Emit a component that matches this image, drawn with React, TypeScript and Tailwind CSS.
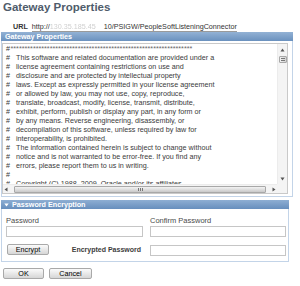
import React from "react";

const lines: string[] = [
  "This software and related documentation are provided under a",
  "license agreement containing restrictions on use and",
  "disclosure and are protected by intellectual property",
  "laws. Except as expressly permitted in your license agreement",
  "or allowed by law, you may not use, copy, reproduce,",
  "translate, broadcast, modify, license, transmit, distribute,",
  "exhibit, perform, publish or display any part, in any form or",
  "by any means. Reverse engineering, disassembly, or",
  "decompilation of this software, unless required by law for",
  "interoperability, is prohibited.",
  "The information contained herein is subject to change without",
  "notice and is not warranted to be error-free. If you find any",
  "errors, please report them to us in writing.",
  "",
  "Copyright (C) 1988, 2009, Oracle and/or its affiliates",
];

function Btn({ label, w }: { label: string; w: string }) {
  return (
    <div
      className={`${w} h-[11px] rounded-[2px] border border-[#a9a9a9] bg-linear-to-b from-[#fbfbfb] to-[#d6d6d6] text-[7.2px] leading-[9px] text-black flex items-center justify-center`}
    >
      {label}
    </div>
  );
}

export default function App() {
  return (
    <div className="w-[300px] h-[286px] bg-white overflow-hidden font-['Liberation_Sans',Arial,sans-serif] text-[#333]">
      {/* Title */}
      <div className="pl-[3px] h-[14px] text-[11.5px] leading-[14px] font-bold text-[#4f5c6b]">
        Gateway Properties
      </div>

      {/* URL row */}
      <div className="mt-[8px] h-[10px] flex items-start pl-[13px] text-[7.2px] leading-[9px]">
        <span className="font-bold text-[#333]">URL</span>
        <span className="ml-[4px] inline-flex h-[10px] border-b border-[#9a9a9a] text-[#333]">
          <span>http://</span>
          <span className="w-[54px] text-[#cfcfcf] blur-[0.6px] whitespace-nowrap">
            130.35.185.45
          </span>
          <span>10/PSIGW/PeopleSoftListeningConnector</span>
        </span>
      </div>

      {/* Gateway Properties panel */}
      <div className="ml-[1px] w-[292px]">
        <div className="h-[9px] bg-linear-to-b from-[#93b2d5] to-[#6a91be] text-white font-bold text-[7.2px] leading-[9px] pl-[4px]">
          Gateway Properties
        </div>
        <div className="border-x border-b border-[#c3d4e8] pt-[2px] pb-[2px]">
          <div className="w-[286px] h-[151px] border border-[#c9c9c9] bg-white flex flex-col">
            <div className="flex flex-1 min-h-0">
              <div className="flex-1 overflow-hidden pl-[3px] text-[7.2px] leading-[9px] text-[#3a3a3a] whitespace-nowrap">
                <div className="flex">
                  <span>#</span>
                  <span className="ml-[0.5px] text-[#666]">{"*".repeat(65)}</span>
                </div>
                {lines.map((l, i) => (
                  <div key={i} className="flex h-[9px]">
                    <span className="w-[10px]">#</span>
                    <span>{l}</span>
                  </div>
                ))}
              </div>
              {/* vertical scrollbar */}
              <div className="w-[10px] bg-[#f4f4f4] border-l border-[#ececec] flex flex-col items-center">
                <svg width="5" height="4" viewBox="0 0 5 4" className="mt-[4px]">
                  <path d="M2.5 0.5 L4.5 3.5 L0.5 3.5 Z" fill="#555" />
                </svg>
                <div className="mt-[4px] w-[8px] h-[7px] border border-[#a8a8a8] rounded-[1px] bg-linear-to-r from-[#f2f2f2] to-[#d2d2d2] flex flex-col justify-center items-center gap-[1px]">
                  <div className="w-[4px] h-px bg-[#777]" />
                  <div className="w-[4px] h-px bg-[#777]" />
                </div>
                <div className="flex-1" />
                <svg width="5" height="4" viewBox="0 0 5 4" className="mb-[3px]">
                  <path d="M0.5 0.5 L4.5 0.5 L2.5 3.5 Z" fill="#555" />
                </svg>
              </div>
            </div>
            {/* horizontal scrollbar */}
            <div className="h-[9px] flex">
              <div className="flex-1 bg-[#f4f4f4] border-t border-[#ececec] flex items-center">
                <svg width="4" height="5" viewBox="0 0 4 5" className="ml-[1px]">
                  <path d="M3.5 0.5 L3.5 4.5 L0.5 2.5 Z" fill="#555" />
                </svg>
                <div className="ml-[6px] w-[252px] h-[7px] border border-[#a8a8a8] rounded-[1px] bg-linear-to-b from-[#f3f3f3] to-[#c9c9c9] flex items-center justify-center gap-[1px]">
                  <div className="w-px h-[3px] bg-[#777]" />
                  <div className="w-px h-[3px] bg-[#777]" />
                  <div className="w-px h-[3px] bg-[#777]" />
                </div>
                <svg width="4" height="5" viewBox="0 0 4 5" className="ml-[6px]">
                  <path d="M0.5 0.5 L0.5 4.5 L3.5 2.5 Z" fill="#555" />
                </svg>
              </div>
              <div className="w-[10px] bg-[#f4f4f4]" />
            </div>
          </div>
        </div>
      </div>

      {/* Password Encryption panel */}
      <div className="ml-[1px] mt-[3px] w-[288px]">
        <div className="h-[9px] bg-linear-to-b from-[#8eaed3] to-[#678fbd] text-white font-bold text-[7.2px] leading-[9px] pl-[3px] flex items-center">
          <svg width="5" height="4" viewBox="0 0 5 4" className="mr-[3px]">
            <path d="M0.3 0.5 L4.7 0.5 L2.5 3.5 Z" fill="#ffffff" />
          </svg>
          Password Encryption
        </div>
        <div className="border-x border-b border-[#c3d4e8] pl-[4px] pt-[7px] pb-[5px]">
          <div className="grid grid-cols-[137px_136px] gap-x-[7px]">
            <div className="text-[7.5px] leading-[9px] h-[9px] text-[#4a4a4a]">Password</div>
            <div className="text-[7.5px] leading-[9px] h-[9px] text-[#4a4a4a]">Confirm Password</div>
            <div className="mt-[1px] h-[11px] border border-[#c6c6c6] bg-white" />
            <div className="mt-[1px] h-[11px] border border-[#c6c6c6] bg-white" />
            <div className="mt-[7px] h-[11px] flex items-center justify-between pl-[1px] pr-[2px]">
              <Btn label="Encrypt" w="w-[42px]" />
              <span className="text-[7px] leading-[9px] font-bold text-[#3d3d3d]">Encrypted Password</span>
            </div>
            <div className="mt-[8px] h-[11px] border border-[#c6c6c6] bg-white" />
          </div>
        </div>
      </div>

      {/* Buttons */}
      <div className="mt-[6px] ml-[3px] flex gap-[5px]">
        <Btn label="OK" w="w-[41px]" />
        <Btn label="Cancel" w="w-[43px]" />
      </div>
    </div>
  );
}
